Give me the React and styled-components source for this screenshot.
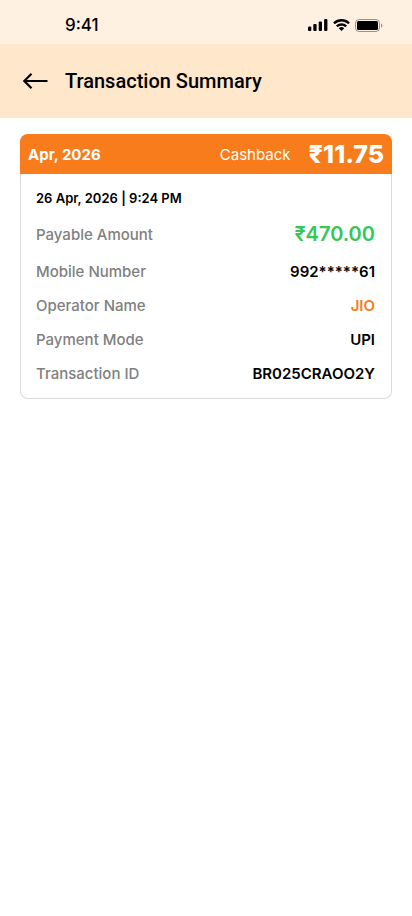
import React from "react";
import styled, { createGlobalStyle } from "styled-components";

const colors = {
  status: "#fff1e1",
  header: "#ffe7cc",
  primary: "#f87c1b",
  success: "#34c759",
  label: "#808080",
  border: "#d9d9d9",
  text: "#000000",
};

const rows = [
  { label: "Payable Amount", value: "₹470.00", color: colors.success, large: true },
  { label: "Mobile Number", value: "992*****61" },
  { label: "Operator Name", value: "JIO", color: colors.primary },
  { label: "Payment Mode", value: "UPI" },
  { label: "Transaction ID", value: "BR025CRAOO2Y" },
];

const App = () => {
  return (
    <Page>
      <GlobalStyle />
      <StatusBar>
        <Time>9:41</Time>
        <StatusIcons>
          <SignalIcon />
          <WifiIcon />
          <BatteryIcon />
        </StatusIcons>
      </StatusBar>

      <Header>
        <BackButton type="button" aria-label="Back">
          <BackIcon />
        </BackButton>
        <Title>Transaction Summary</Title>
      </Header>

      <main>
        <Card>
          <CardHeader>
            <Month>Apr, 2026</Month>
            <CashbackLabel>Cashback</CashbackLabel>
            <CashbackAmount>₹11.75</CashbackAmount>
          </CardHeader>
          <CardBody>
            <DateTime>26 Apr, 2026 | 9:24 PM</DateTime>
            <Details>
              {rows.map((row) => (
                <Row key={row.label} $large={row.large}>
                  <Label>{row.label}</Label>
                  <Value $color={row.color} $large={row.large}>
                    {row.value}
                  </Value>
                </Row>
              ))}
            </Details>
          </CardBody>
        </Card>
      </main>
    </Page>
  );
};

const SignalIcon = () => (
  <svg width="20" height="12" viewBox="0 0 20 12" aria-hidden="true">
    <rect x="0" y="7.5" width="3.3" height="4.5" rx="1" />
    <rect x="5.3" y="5" width="3.3" height="7" rx="1" />
    <rect x="10.7" y="2.6" width="3.3" height="9.4" rx="1" />
    <rect x="16.1" y="0" width="3.3" height="12" rx="1" />
  </svg>
);

const WifiIcon = () => (
  <svg width="17" height="12" viewBox="0 0 17 12" aria-hidden="true">
    <path d="M8.5 2.6c2.4 0 4.7.9 6.4 2.5.1.1.3.1.5 0l1.2-1.3c.2-.1.2-.4 0-.5A11.8 11.8 0 0 0 .4 3.3c-.2.1-.2.4 0 .5l1.2 1.3c.2.1.4.1.5 0a9.3 9.3 0 0 1 6.4-2.5z" />
    <path d="M8.5 6.8c1.3 0 2.6.5 3.5 1.3.2.2.4.2.5 0l1.3-1.3c.1-.2.1-.4 0-.5a7.8 7.8 0 0 0-10.6 0c-.2.1-.2.4 0 .5l1.3 1.3c.1.2.4.2.5 0a5.3 5.3 0 0 1 3.5-1.3z" />
    <path d="M11 9.6c.2-.1.2-.4 0-.5a3.9 3.9 0 0 0-5 0c-.2.1-.2.4 0 .5l2.2 2.2c.2.2.4.2.6 0z" />
  </svg>
);

const BatteryIcon = () => (
  <svg width="28" height="13" viewBox="0 0 28 13" aria-hidden="true">
    <rect x="0.5" y="0.5" width="24" height="12" rx="3.6" fill="none" stroke="#000" strokeOpacity="0.4" />
    <path d="M26 4.5v4.2c.9-.4 1.4-1.2 1.4-2.1s-.5-1.7-1.4-2.1z" fillOpacity="0.4" />
    <rect x="2" y="2" width="21" height="9" rx="1.5" />
  </svg>
);

const BackIcon = () => (
  <svg width="26" height="18" viewBox="0 0 26 18" aria-hidden="true">
    <path d="M8.5 1.8 1.3 9l7.2 7.2M1.3 9H24.5" fill="none" stroke="#000" strokeWidth="2.2" />
  </svg>
);

const GlobalStyle = createGlobalStyle`
  * {
    box-sizing: border-box;
  }

  body {
    margin: 0;
    background: white;
    color: ${colors.text};
    font-family: Inter, Roboto, sans-serif;
  }
`;

const Page = styled.div`
  min-height: 100vh;
`;

const StatusBar = styled.div`
  display: flex;
  align-items: center;
  justify-content: space-between;
  height: 44px;
  padding: 6px 29px 0 65px;
  background: ${colors.status};
`;

const Time = styled.span`
  font-size: 17px;
  font-weight: 500;
  line-height: 20px;
`;

const StatusIcons = styled.div`
  display: flex;
  align-items: center;
  gap: 5px;
`;

const Header = styled.header`
  display: flex;
  align-items: center;
  gap: 16px;
  height: 74px;
  padding: 0 23px;
  background: ${colors.header};
`;

const BackButton = styled.button`
  display: flex;
  padding: 0;
  border: none;
  background: none;
  cursor: pointer;
`;

const Title = styled.h1`
  margin: 0;
  font-family: Roboto, sans-serif;
  font-size: 20px;
  font-weight: 500;
  line-height: 24px;
`;

const Card = styled.section`
  margin: 16px 20px;
  border: 1px solid ${colors.border};
  border-top: none;
  border-radius: 8px;
`;

const CardHeader = styled.div`
  display: flex;
  align-items: center;
  height: 40px;
  margin: 0 -1px;
  padding: 0 8px;
  border-radius: 8px 8px 0 0;
  background: ${colors.primary};
  color: white;
`;

const Month = styled.h2`
  flex: 1;
  margin: 0;
  font-size: 15px;
  font-weight: 700;
`;

const CashbackLabel = styled.span`
  margin-right: 18px;
  font-size: 15px;
  font-weight: 400;
`;

const CashbackAmount = styled.strong`
  font-size: 25px;
  font-weight: 800;
`;

const CardBody = styled.div`
  padding: 16px 16px 16px 15px;
`;

const DateTime = styled.p`
  margin: 0 0 16px;
  font-size: 13px;
  font-weight: 600;
  line-height: 16px;
`;

const Details = styled.dl`
  display: flex;
  flex-direction: column;
  gap: 16px;
  margin: 0;
`;

const Row = styled.div`
  display: flex;
  align-items: center;
  justify-content: space-between;
  height: ${(props) => (props.$large ? "24px" : "18px")};
`;

const Label = styled.dt`
  color: ${colors.label};
  font-size: 15px;
  font-weight: 500;
`;

const Value = styled.dd`
  margin: 0;
  color: ${(props) => props.$color || colors.text};
  font-size: ${(props) => (props.$large ? "20px" : "15px")};
  font-weight: 600;
`;

export default App;
